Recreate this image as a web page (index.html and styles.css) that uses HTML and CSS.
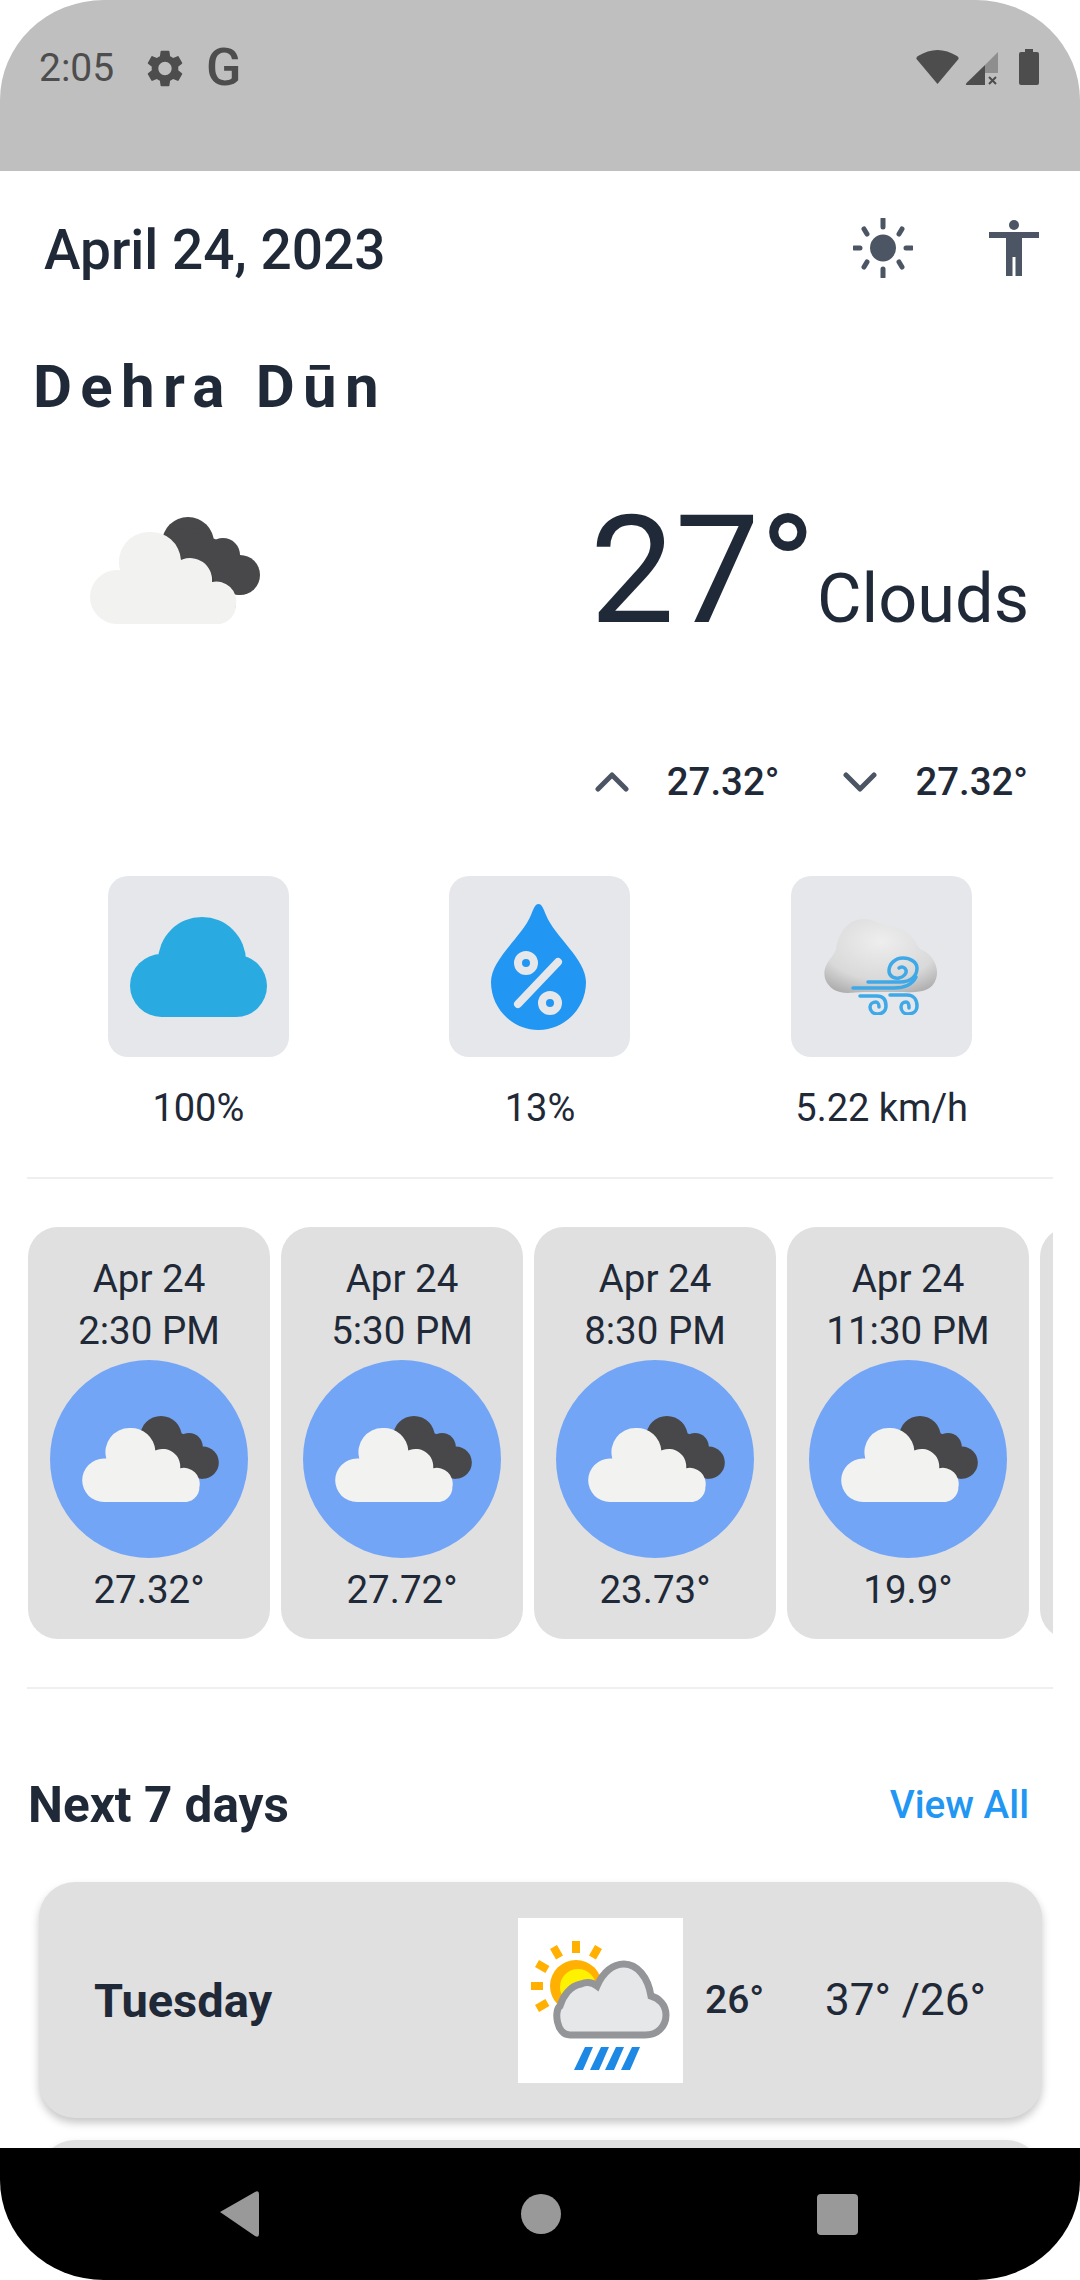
FILE: index.html
```html
<!DOCTYPE html>
<html lang="en">
<head>
<meta charset="utf-8">
<title>Weather</title>
<link rel="stylesheet" href="styles.css">
</head>
<body>
<svg class="defs" width="0" height="0" aria-hidden="true">
  <symbol id="clouds" viewBox="0 0 170 107">
    <g fill="#48484a">
      <circle cx="98" cy="26" r="26"/>
      <circle cx="133" cy="38" r="17"/>
      <circle cx="150" cy="58" r="20"/>
      <path d="M80 10 L125 22 L168 50 L150 78 L110 70 L72 30Z"/>
    </g>
    <path d="M98 44 a24 24 0 0 1 26 24 a22 22 0 0 1 22 22 L128 100 L60 60Z" fill="#2f2f31" opacity=".5"/>
    <path d="M27 107 H124 A19 19 0 0 0 146 88 A20 20 0 0 0 122 65 A22 22 0 0 0 91 43 A30 30 0 0 0 59 15 A30 30 0 0 0 30 53 L27 53 A27 27 0 0 0 27 107Z" fill="#f2f2f1"/>
  </symbol>
</svg>
<div class="phone">
  <header class="status">
    <div class="status-left">
      <span class="clock">2:05</span>
      <svg class="gear" viewBox="2.5 2 19 20"><path d="M19.14 12.94c.04-.3.06-.61.06-.94 0-.32-.02-.64-.07-.94l2.03-1.58c.18-.14.23-.41.12-.61l-1.92-3.32c-.12-.22-.37-.29-.59-.22l-2.39.96c-.5-.38-1.03-.7-1.62-.94l-.36-2.54c-.04-.24-.24-.41-.48-.41h-3.84c-.24 0-.43.17-.47.41l-.36 2.54c-.59.24-1.13.57-1.62.94l-2.39-.96c-.22-.08-.47 0-.59.22L2.74 8.87c-.12.21-.08.47.12.61l2.03 1.58c-.05.3-.09.63-.09.94s.02.64.07.94l-2.03 1.58c-.18.14-.23.41-.12.61l1.92 3.32c.12.22.37.29.59.22l2.39-.96c.5.38 1.03.7 1.62.94l.36 2.54c.05.24.24.41.48.41h3.84c.24 0 .44-.17.47-.41l.36-2.54c.59-.24 1.13-.56 1.62-.94l2.39.96c.22.08.47 0 .59-.22l1.92-3.32c.12-.22.07-.47-.12-.61l-2.01-1.58zM12 15.6c-1.98 0-3.6-1.62-3.6-3.6s1.62-3.6 3.6-3.6 3.6 1.62 3.6 3.6-1.62 3.6-3.6 3.6z"/></svg>
      <span class="google">G</span>
    </div>
    <div class="status-right">
      <svg class="wifi" viewBox="0 0 43 34"><path d="M21.5 34 L0.5 9 Q0 7 2 6 Q21.5 -6 41 6 Q43 7 42.500 9Z"/></svg>
      <svg class="signal" viewBox="0 0 33 34"><path class="sig-dim" d="M33 1V22H20V14Z"/><path d="M20 14V34H2Q0 34 1.500 32Z"/><path class="sig-x" d="M24 26l7 7m0-7l-7 7"/></svg>
      <svg class="battery" viewBox="0 0 20 36"><path d="M6 0h8v3h4q2 0 2 2v29q0 2-2 2H2q-2 0-2-2V5q0-2 2-2h4Z"/></svg>
    </div>
  </header>

  <main class="content">
    <div class="topbar">
      <h1 class="date">April 24, 2023</h1>
      <div class="top-icons">
        <svg class="sun" viewBox="0 0 60 60">
          <ellipse cx="30" cy="30" rx="13" ry="13.500"/>
          <g class="rays">
            <path d="M30 1v8M30 51v8M1 30h6M53 30h6M11 11l3 5M49 11l-3 5M11 49l3-5M49 49l-3-5"/>
          </g>
        </svg>
        <svg class="person" viewBox="0 0 50 56">
          <circle cx="25" cy="5" r="5"/>
          <path d="M0 12H50V18H33V56H26.500V37H23.500V56H17V18H0Z"/>
        </svg>
      </div>
    </div>
    <h2 class="city">Dehra Dūn</h2>

    <section class="hero">
      <svg class="hero-icon"><use href="#clouds"/></svg>
      <div class="hero-temp">
        <span class="temp">27°</span>
        <span class="cond">Clouds</span>
      </div>
    </section>

    <section class="minmax">
      <svg class="chev" viewBox="0 0 34 20"><path d="M3 17L17 3L31 17"/></svg>
      <span class="mm-val">27.32°</span>
      <svg class="chev chev-down" viewBox="0 0 34 20"><path d="M3 3L17 17L31 3"/></svg>
      <span class="mm-val">27.32°</span>
    </section>

    <section class="metrics">
      <div class="metric">
        <div class="tile">
          <svg class="m-cloud" viewBox="0 0 137 100">
            <circle cx="31.500" cy="68.500" r="31.500"/>
            <circle cx="72" cy="44" r="44"/>
            <circle cx="106" cy="69" r="31"/>
            <rect x="31" y="60" width="75" height="40"/>
          </svg>
        </div>
        <span class="metric-label">100%</span>
      </div>
      <div class="metric">
        <div class="tile">
          <svg class="m-drop" viewBox="0 0 95 126">
            <path class="drop-body" d="M47.500 0C51 0 52 4 55 11C64 33 95 55 95 78C95 105 73 126 47.500 126C22 126 0 105 0 78C0 55 31 33 40 11C43 4 44 0 47.500 0Z"/>
            <circle class="pct-ring" cx="35" cy="59" r="8"/>
            <circle class="pct-ring" cx="59" cy="99" r="8"/>
            <path class="pct-bar" d="M67 58L27 100"/>
          </svg>
        </div>
        <span class="metric-label">13%</span>
      </div>
      <div class="metric">
        <div class="tile">
          <svg class="m-wind" viewBox="0 0 114 96">
            <defs>
              <radialGradient id="puff" cx=".5" cy=".3" r=".8">
                <stop offset="0" stop-color="#eeeeee"/>
                <stop offset=".65" stop-color="#d9d9d9"/>
                <stop offset="1" stop-color="#a9a9a9"/>
              </radialGradient>
            </defs>
            <path d="M16 73C4 70 -3 58 2 47C4 41 10 37 12 30C15 12 25 0 40 0C50 0 56 6 68 8C84 10 90 20 96 30C108 34 116 48 112 60C108 72 96 74 80 73H40C30 73 24 75 16 73Z" fill="url(#puff)"/>
            <g class="wind-lines">
              <path d="M44 63H76C87 63 93 57 93 49C93 43 86 39 79 39C71 39 65 45 65 52C65 57 70 60 75 59C80 58 83 54 82 51C81 48 77 47 75 49"/>
              <path d="M29 69H70C80 69 88 66 92 58"/>
              <path d="M36 77H53C60 77 62 82 62 87C62 92 58 95 54 95C49 95 46 92 46 88C46 85 49 83 52 83C54 83 55 86 55 88"/>
              <path d="M66 76H83C90 76 93 81 93 87C93 92 89 95 84 95C80 95 77 92 77 88C77 85 79 83 82 83C84 83 85 86 85 89"/>
            </g>
          </svg>
        </div>
        <span class="metric-label">5.22 km/h</span>
      </div>
    </section>

    <hr class="rule rule-a">

    <section class="forecast">
      <article class="hour">
        <p class="hour-text">Apr 24<br>2:30 PM</p>
        <div class="orb"><svg class="orb-icon"><use href="#clouds"/></svg></div>
        <p class="hour-temp">27.32°</p>
      </article>
      <article class="hour">
        <p class="hour-text">Apr 24<br>5:30 PM</p>
        <div class="orb"><svg class="orb-icon"><use href="#clouds"/></svg></div>
        <p class="hour-temp">27.72°</p>
      </article>
      <article class="hour">
        <p class="hour-text">Apr 24<br>8:30 PM</p>
        <div class="orb"><svg class="orb-icon"><use href="#clouds"/></svg></div>
        <p class="hour-temp">23.73°</p>
      </article>
      <article class="hour">
        <p class="hour-text">Apr 24<br>11:30 PM</p>
        <div class="orb"><svg class="orb-icon"><use href="#clouds"/></svg></div>
        <p class="hour-temp">19.9°</p>
      </article>
      <article class="hour"></article>
    </section>

    <hr class="rule rule-b">

    <div class="week-head">
      <h3 class="week-title">Next 7 days</h3>
      <span class="view-all">View All</span>
    </div>

    <section class="week">
      <article class="day">
        <span class="day-name">Tuesday</span>
        <svg class="day-icon" viewBox="0 0 165 165">
          <rect width="165" height="165" fill="#fff"/>
          <g class="day-rays">
            <path d="M58 23V35"/>
            <path d="M58 23V35" transform="rotate(30 58 68)"/>
            <path d="M58 23V35" transform="rotate(-30 58 68)"/>
            <path d="M58 23V35" transform="rotate(-60 58 68)"/>
            <path d="M58 23V35" transform="rotate(-90 58 68)"/>
            <path d="M58 23V35" transform="rotate(-120 58 68)"/>
          </g>
          <circle cx="58" cy="68" r="26" fill="#ffb000"/>
          <circle cx="60" cy="69" r="18" fill="#fff200"/>
          <path class="day-cloud" d="M52 117H127C140 117 148 108 148 97C148 87 141 80 133 78C130 59 119 46 106 46C95 46 85 54 79 68C74 64 68 64 63 66C52 68 45 78 42 88C36 92 38 117 52 117Z"/>
          <g fill="#1e88e5">
            <path d="M67 129H75L65 152H56Z"/>
            <path d="M83 129H91L81 152H72Z"/>
            <path d="M98 129H106L96 152H87Z"/>
            <path d="M114 129H122L112 152H103Z"/>
          </g>
        </svg>
        <span class="day-temp">26°</span>
        <span class="day-range">37° /26°</span>
      </article>
      <article class="day"></article>
    </section>
  </main>

  <footer class="nav">
    <svg class="nav-back" viewBox="0 0 40 46"><path d="M1 21L36 1Q40 -1 40 3V43Q40 47 36 45Z"/></svg>
    <span class="nav-home"></span>
    <span class="nav-recent"></span>
  </footer>
</div>
</body>
</html>
```

FILE: styles.css
```css
* { box-sizing: border-box; }
html, body { margin: 0; padding: 0; background: #fff; }
body { font-family: Roboto, "Liberation Sans", sans-serif; color: #1f2937; }
.defs { position: absolute; }

.phone { width: 1080px; height: 2280px; overflow: hidden; display: flex; flex-direction: column; background: #fff; }

.status { flex: 0 0 171px; background: #bfbfbf; border-radius: 104px 104px 0 0 / 100px 100px 0 0; display: flex; justify-content: space-between; align-items: flex-start; padding: 50px 41px 0 39px; color: #4d4d4d; }
.status-left { display: flex; align-items: center; height: 36px; }
.clock { font-size: 39px; line-height: 36px; width: 108px; }
.gear { width: 36px; height: 37px; fill: #4d4d4d; }
.google { font-size: 52px; font-weight: 500; line-height: 36px; margin-left: 23px; }
.status-right { display: flex; align-items: flex-start; margin-top: -1px; }
.wifi { width: 43px; height: 34px; fill: #4d4d4d; margin-top: 1px; }
.signal { width: 33px; height: 34px; fill: #4d4d4d; margin: 2px 21px 0 6px; }
.sig-dim { fill: #8e8e8e; }
.sig-x { fill: none; stroke: #4d4d4d; stroke-width: 2; }
.battery { width: 20px; height: 36px; fill: #4d4d4d; }

.content { flex: 1 1 0; overflow: hidden; min-height: 0; }

.topbar { height: 154px; display: flex; align-items: center; justify-content: space-between; padding: 0 41px 0 44px; }
.date { margin: 4px 0 0; font-size: 55px; font-weight: 500; line-height: 60px; }
.top-icons { display: flex; align-items: center; gap: 76px; }
.sun { width: 60px; height: 60px; fill: #4b5563; }
.rays path { fill: none; stroke: #4b5563; stroke-width: 5; stroke-linecap: round; }
.person { width: 50px; height: 56px; fill: #4b5563; }

.city { margin: 27px 0 0; padding-left: 33px; font-size: 60px; font-weight: 700; line-height: 70px; letter-spacing: 8.300px; }

.hero { height: 298px; display: flex; justify-content: space-between; padding: 95px 51px 0 90px; }
.hero-icon { width: 170px; height: 107px; }
.hero-temp { display: flex; align-items: baseline; margin-top: -36px; height: 180px; }
.temp { font-size: 151px; line-height: 180px; }
.cond { font-size: 68.500px; line-height: 80px; margin-left: 1px; }

.minmax { display: flex; align-items: center; justify-content: flex-end; height: 60px; margin-top: 32px; padding-right: 52px; }
.chev { width: 34px; height: 20px; }
.chev path { fill: none; stroke: #4b5563; stroke-width: 5; stroke-linecap: round; stroke-linejoin: round; }
.chev-down { margin-left: 64px; }
.mm-val { font-size: 38.400px; font-weight: 500; line-height: 60px; margin-left: 38px; }

.metrics { display: grid; grid-template-columns: repeat(3, 1fr); margin: 64px 27.500px 0; }
.metric { display: flex; flex-direction: column; align-items: center; }
.tile { width: 181px; height: 181px; border-radius: 20px; background: #e5e7eb; display: flex; align-items: center; justify-content: center; }
.metric-label { margin-top: 29px; font-size: 38px; line-height: 44px; }
.m-cloud { width: 137px; height: 100px; fill: #29abe2; }
.m-drop { width: 95px; height: 126px; margin-right: 3px; }
.drop-body { fill: #2196f3; }
.pct-ring { fill: #2196f3; stroke: #e5e7eb; stroke-width: 8; }
.pct-bar { fill: none; stroke: #e5e7eb; stroke-width: 8; stroke-linecap: round; }
.m-wind { width: 114px; height: 96px; margin-right: 2px; }
.wind-lines path { fill: none; stroke: #3fa9e8; stroke-width: 3.500; stroke-linecap: round; }

.rule { border: 0; height: 2px; background: #eeeff1; margin: 0 27px; }
.rule-a { margin-top: 47px; }
.rule-b { margin-top: 48px; }

.forecast { display: flex; gap: 11px; margin: 48px 27px 0; padding-left: 1px; overflow: hidden; }
.hour { flex: 0 0 242px; height: 412px; border-radius: 30px; background: #e0e0e0; display: flex; flex-direction: column; align-items: center; padding-top: 26px; }
.hour-text { margin: 0; font-size: 38.500px; line-height: 52px; text-align: center; }
.orb { width: 198px; height: 198px; border-radius: 50%; background: #73a5f6; margin-top: 3px; display: flex; align-items: center; justify-content: center; }
.orb-icon { width: 137px; height: 86px; margin-left: 2px; margin-top: -1px; }
.hour-temp { margin: 6px 0 0; font-size: 38.500px; line-height: 52px; }

.week-head { display: flex; align-items: center; justify-content: space-between; height: 60px; margin-top: 86px; padding: 0 51px 0 28px; }
.week-title { margin: 0; font-size: 49.500px; font-weight: 700; line-height: 60px; }
.view-all { font-size: 38.700px; font-weight: 500; color: #2196f3; line-height: 60px; }

.week { display: flex; flex-direction: column; gap: 22px; margin: 47px 38px 0 39px; }
.day { flex: 0 0 236px; height: 236px; border-radius: 36px; background: #e0e0e0; box-shadow: 0 5px 8px rgba(0, 0, 0, .22); display: flex; align-items: center; padding-left: 55px; }
.day-name { font-size: 47px; font-weight: 700; width: 424px; }
.day-icon { width: 165px; height: 165px; }
.day-rays path { fill: none; stroke: #ffb000; stroke-width: 8; }
.day-cloud { fill: #e6e7e8; stroke: #939598; stroke-width: 7; }
.day-temp { font-size: 39px; font-weight: 500; margin-left: 22px; width: 120px; }
.day-range { font-size: 44px; }

.nav { flex: 0 0 132px; background: #000; border-radius: 0 0 104px 104px / 0 0 100px 100px; display: flex; align-items: center; padding-left: 219px; }
.nav-back { width: 40px; height: 46px; fill: #999; }
.nav-home { width: 40px; height: 40px; border-radius: 50%; background: #999; margin-left: 262px; }
.nav-recent { width: 41px; height: 41px; border-radius: 4px; background: #999; margin-left: 256px; }
```
